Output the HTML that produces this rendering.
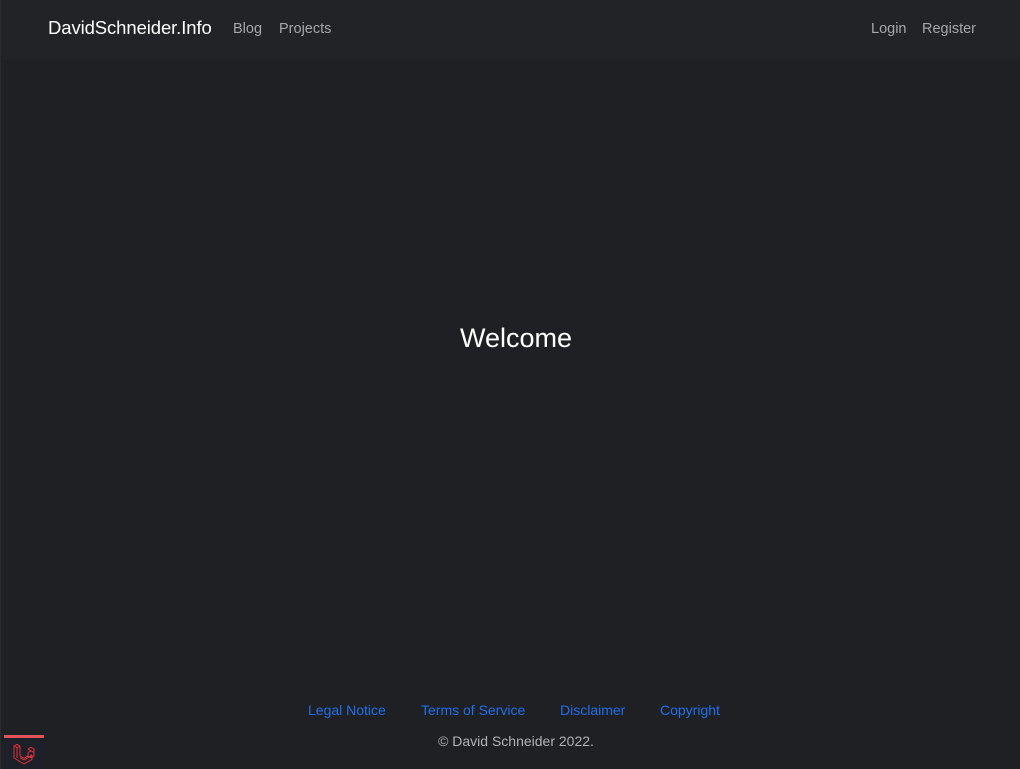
<!DOCTYPE html>
<html><head><meta charset="utf-8"><style>
html,body{margin:0;padding:0}
body{width:1020px;height:769px;background:#1f2024;font-family:"Liberation Sans","DejaVu Sans",sans-serif;position:relative;overflow:hidden;border-left:1px solid #2a2b30;box-sizing:border-box}
nav{position:absolute;left:0;top:0;width:1020px;height:60px;background:#212327}
.brand{position:absolute;left:47px;top:17px;color:#fff;font-size:18.5px;letter-spacing:-0.1px}
.nl{position:absolute;top:21px;color:#a5a7aa;font-size:14.5px}
h1{position:absolute;left:0;width:1030px;text-align:center;top:323px;margin:0;font-weight:normal;color:#fff;font-size:27px}
.f{position:absolute;top:702px;color:#1f6feb;font-size:14px}
.c{position:absolute;top:733px;left:0;width:1030px;text-align:center;color:#b0b2b5;font-size:14px}
.lv{position:absolute;left:3px;top:735px;width:40px;height:34px;background:#1d1f29;border-top:3px solid #e3525a;box-sizing:border-box}
</style></head><body>
<nav>
<div class="brand">DavidSchneider.Info</div>
<div class="nl" style="left:232px">Blog</div>
<div class="nl" style="left:278px">Projects</div>
<div class="nl" style="left:870px">Login</div>
<div class="nl" style="left:921px">Register</div>
</nav>
<h1>Welcome</h1>
<div class="f" style="left:307px">Legal Notice</div>
<div class="f" style="left:420px">Terms of Service</div>
<div class="f" style="left:559px">Disclaimer</div>
<div class="f" style="left:659px">Copyright</div>
<div class="c">© David Schneider 2022.</div>
<div class="lv"><svg width="22" height="22" viewBox="0 0 22 22" style="position:absolute;left:9px;top:5px" fill="none" stroke="#e0333b" stroke-width="1" stroke-linejoin="round"><path d="M1 3l3-1.7L7 3v10l4 2.3 4-2.3V9.5m-8-6.5L4 4.7 1 3v12l10 6 8-4.6v-4l-8 4.6-4-2.3M4 4.7V15m11-5.5l3-1.7 3 1.7v3.5l-3 1.7-3-1.7V9.5m3-1.7L15 6l3-1.7 3 1.7v3.5M18 11.3V15"/></svg></div>
</body></html>
